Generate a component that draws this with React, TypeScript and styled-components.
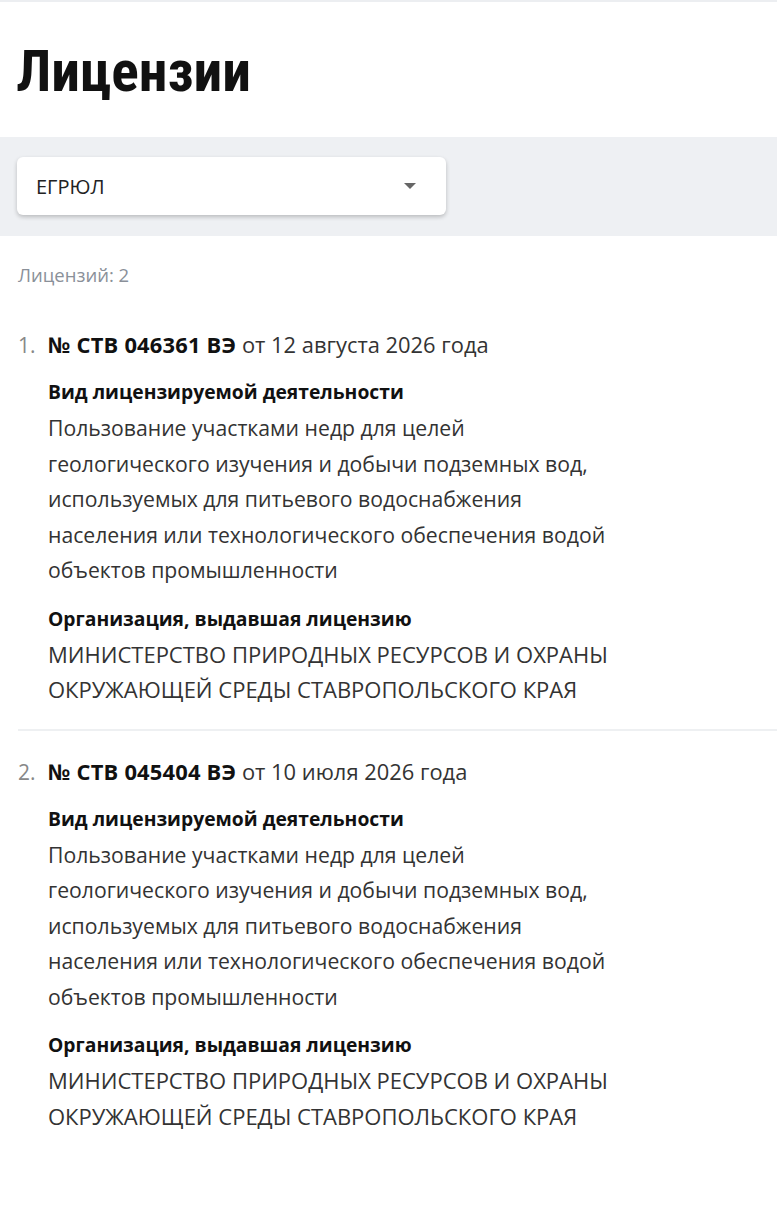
import React from "react";
import styled, { createGlobalStyle } from "styled-components";

const Global = createGlobalStyle`
  html, body { margin: 0; padding: 0; background: #fff; }
  body { font-family: "Open Sans", "Noto Sans", sans-serif; color: #222; }
  * { box-sizing: border-box; }
`;

const Page = styled.div`
  width: 777px;
  min-height: 1213px;
  background: #fff;
  border-top: 2px solid #eceef1;
`;

const Title = styled.h1`
  margin: 0;
  padding: 40px 16px 35px;
  font-family: "Roboto Condensed", "Roboto", sans-serif;
  font-size: 57.5px;
  line-height: 60px;
  font-weight: 700;
  color: #111;
`;

const FilterBar = styled.div`
  background: #eef0f3;
  padding: 20px 17px 21px;
`;

const Select = styled.div`
  width: 429px;
  height: 58px;
  background: #fff;
  border-radius: 6px;
  box-shadow: 0 2px 4px rgba(0, 0, 0, 0.22);
  display: flex;
  align-items: center;
  justify-content: space-between;
  padding: 0 30px 0 19px;
  font-size: 20px;
  color: #222;
`;

const Caret = styled.span`
  width: 0;
  height: 0;
  border-left: 6px solid transparent;
  border-right: 6px solid transparent;
  border-top: 6px solid #666;
`;

const Content = styled.div`
  padding: 27px 0 0 18px;
`;

const Count = styled.div`
  font-size: 18.5px;
  color: #8a9099;
  line-height: 24px;
  margin-bottom: 44px;
`;

const Item = styled.div<{ $last?: boolean }>`
  display: flex;
  padding-bottom: ${(p) => (p.$last ? "0" : "21px")};
  border-bottom: ${(p) => (p.$last ? "none" : "2px solid #eef0f2")};
  margin-bottom: ${(p) => (p.$last ? "0" : "27px")};
`;

const Num = styled.div`
  width: 30px;
  font-size: 21px;
  line-height: 28px;
  color: #888;
`;

const Body = styled.div`
  flex: 1;
`;

const Head = styled.div`
  font-size: 21.9px;
  line-height: 28px;
  color: #333;
  white-space: nowrap;
  b { color: #111; font-weight: 700; letter-spacing: 0.2px; }
`;

const Label = styled.div<{ $gap: number }>`
  font-size: 19.3px;
  font-weight: 700;
  color: #111;
  line-height: 36px;
  margin-top: ${(p) => p.$gap}px;
`;

const Text = styled.div<{ $size: number }>`
  font-size: ${(p) => p.$size}px;
  line-height: 35.5px;
  color: #333;
  white-space: nowrap;
`;

type Lic = { n: number; num: string; date: string };

const items: Lic[] = [
  { n: 1, num: "№ СТВ 046361 ВЭ", date: "от 12 августа 2026 года" },
  { n: 2, num: "№ СТВ 045404 ВЭ", date: "от 10 июля 2026 года" },
];

const activity = [
  "Пользование участками недр для целей",
  "геологического изучения и добычи подземных вод,",
  "используемых для питьевого водоснабжения",
  "населения или технологического обеспечения водой",
  "объектов промышленности",
];

const org = [
  "МИНИСТЕРСТВО ПРИРОДНЫХ РЕСУРСОВ И ОХРАНЫ",
  "ОКРУЖАЮЩЕЙ СРЕДЫ СТАВРОПОЛЬСКОГО КРАЯ",
];

export default function App() {
  return (
    <Page>
      <Global />
      <Title>Лицензии</Title>
      <FilterBar>
        <Select>
          <span>ЕГРЮЛ</span>
          <Caret />
        </Select>
      </FilterBar>
      <Content>
        <Count>Лицензий: 2</Count>
        {items.map((it, i) => (
          <Item key={it.n} $last={i === items.length - 1}>
            <Num>{it.n}.</Num>
            <Body>
              <Head>
                <b>{it.num}</b> {it.date}
              </Head>
              <Label $gap={15}>Вид лицензируемой деятельности</Label>
              <Text $size={21.2}>
                {activity.map((l) => (
                  <div key={l}>{l}</div>
                ))}
              </Text>
              <Label $gap={13}>Организация, выдавшая лицензию</Label>
              <Text $size={22}>
                {org.map((l) => (
                  <div key={l}>{l}</div>
                ))}
              </Text>
            </Body>
          </Item>
        ))}
      </Content>
    </Page>
  );
}
